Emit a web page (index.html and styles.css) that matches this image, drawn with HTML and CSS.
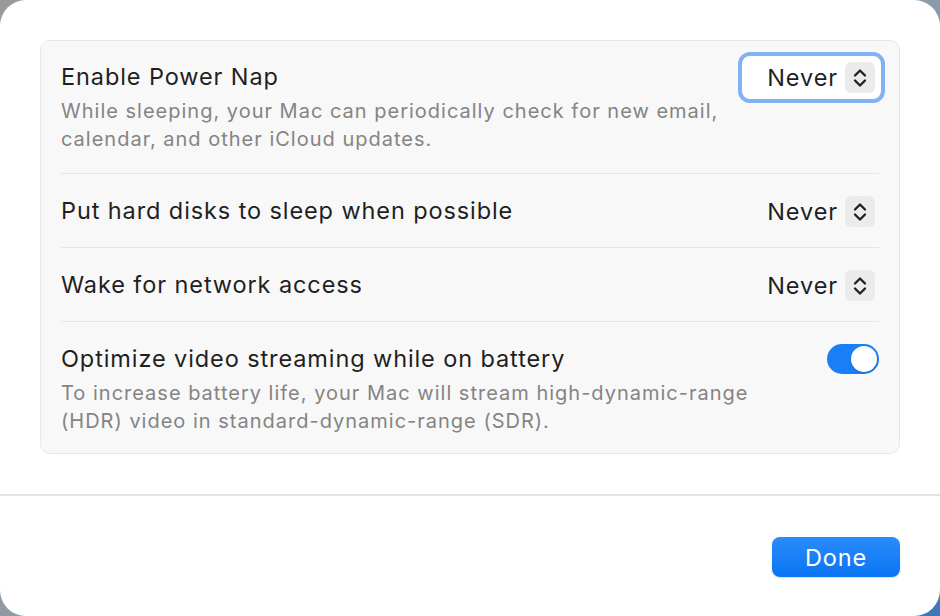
FILE: index.html
```html
<!DOCTYPE html>
<html lang="en">
<head>
    <meta charset="UTF-8">
    <meta name="viewport" content="width=device-width, initial-scale=1.0">
    <title>Battery Options</title>
    <link rel="stylesheet" href="styles.css">
</head>
<body>
    <div class="sheet">
        <div class="content">
            <div class="group">
                <div class="row first">
                    <div class="text">
                        <div class="title">Enable Power Nap</div>
                        <div class="desc">While sleeping, your Mac can periodically check for new email, calendar, and other iCloud updates.</div>
                    </div>
                    <div class="popup focused">
                        <span class="value">Never</span>
                        <span class="stepper">
                            <svg width="16" height="22" viewBox="0 0 16 22"><path d="M3 8.5 L8 3.5 L13 8.5 M3 13.5 L8 18.5 L13 13.5" fill="none" stroke="#1f1f1f" stroke-width="2.3" stroke-linecap="round" stroke-linejoin="round"/></svg>
                        </span>
                    </div>
                </div>
                <div class="row">
                    <div class="text">
                        <div class="title">Put hard disks to sleep when possible</div>
                    </div>
                    <div class="popup">
                        <span class="value">Never</span>
                        <span class="stepper">
                            <svg width="16" height="22" viewBox="0 0 16 22"><path d="M3 8.5 L8 3.5 L13 8.5 M3 13.5 L8 18.5 L13 13.5" fill="none" stroke="#1f1f1f" stroke-width="2.3" stroke-linecap="round" stroke-linejoin="round"/></svg>
                        </span>
                    </div>
                </div>
                <div class="row">
                    <div class="text">
                        <div class="title">Wake for network access</div>
                    </div>
                    <div class="popup">
                        <span class="value">Never</span>
                        <span class="stepper">
                            <svg width="16" height="22" viewBox="0 0 16 22"><path d="M3 8.5 L8 3.5 L13 8.5 M3 13.5 L8 18.5 L13 13.5" fill="none" stroke="#1f1f1f" stroke-width="2.3" stroke-linecap="round" stroke-linejoin="round"/></svg>
                        </span>
                    </div>
                </div>
                <div class="row last">
                    <div class="text">
                        <div class="title">Optimize video streaming while on battery</div>
                        <div class="desc">To increase battery life, your Mac will stream high-dynamic-range (HDR) video in standard-dynamic-range (SDR).</div>
                    </div>
                    <div class="toggle on"><span class="knob"></span></div>
                </div>
            </div>
        </div>
        <div class="footer">
            <button class="done">Done</button>
        </div>
    </div>
</body>
</html>
```
FILE: styles.css
```css
html, body {
    margin: 0;
    height: 100%;
}
body {
    background: linear-gradient(135deg, #9a9a9a 0%, #8d9aaa 60%, #3f78b8 100%);
    font-family: Inter, "Noto Sans", sans-serif;
    color: #1f1f1f;
}
.sheet {
    height: 616px;
    background: #ffffff;
    border-radius: 26px;
    display: flex;
    flex-direction: column;
    overflow: hidden;
}
.content {
    padding: 40px 40px 40px 40px;
    border-bottom: 2px solid #e3e3e3;
}
.group {
    background: #f8f8f8;
    border: 1px solid #e7e7e7;
    border-radius: 10px;
    padding: 0 20px;
}
.row {
    display: flex;
    align-items: flex-start;
    justify-content: space-between;
    padding: 23px 0 20px;
    border-bottom: 1px solid #e6e6e6;
}
.row.first {
    padding: 22px 0 20px;
}
.row.last {
    padding-bottom: 18px;
    border-bottom: none;
}
.text {
    max-width: 700px;
}
.title {
    font-size: 23.5px;
    line-height: 28px;
    letter-spacing: 0.9px;
}
.desc {
    margin-top: 6px;
    font-size: 20px;
    line-height: 28px;
    color: #848484;
    letter-spacing: 1px;
}
.popup {
    display: flex;
    align-items: center;
    gap: 7px;
    height: 31px;
    margin-top: -1px;
    margin-right: 4px;
    border-radius: 8px;
}
.popup.focused {
    margin-right: -6px;
    margin-top: -11px;
    padding: 6px 6px 6px 25px;
    border: 4px solid #82b2f4;
    border-radius: 12px;
    background: #ffffff;
}
.value {
    font-size: 23.5px;
    letter-spacing: 0.9px;
}
.stepper {
    width: 30px;
    height: 31px;
    border-radius: 6px;
    background: #ebebeb;
    display: flex;
    align-items: center;
    justify-content: center;
}
.toggle {
    width: 52px;
    height: 30px;
    border-radius: 15px;
    background: #1a7ff6;
    position: relative;
    margin-top: -1px;
}
.toggle .knob {
    position: absolute;
    right: 2px;
    top: 2px;
    width: 26px;
    height: 26px;
    border-radius: 50%;
    background: #ffffff;
    box-shadow: 0 1px 2px rgba(0, 0, 0, 0.2);
}
.footer {
    flex: 1;
    display: flex;
    justify-content: flex-end;
    align-items: flex-start;
    padding: 41px 40px 0;
}
.done {
    width: 128px;
    height: 40px;
    border: none;
    border-radius: 8px;
    background: linear-gradient(#2b8bfb, #0a74f4);
    color: #ffffff;
    font-family: Inter, "Noto Sans", sans-serif;
    font-size: 23.5px;
    letter-spacing: 0.9px;
    box-shadow: 0 1px 2px rgba(0, 0, 0, 0.15);
}
```
